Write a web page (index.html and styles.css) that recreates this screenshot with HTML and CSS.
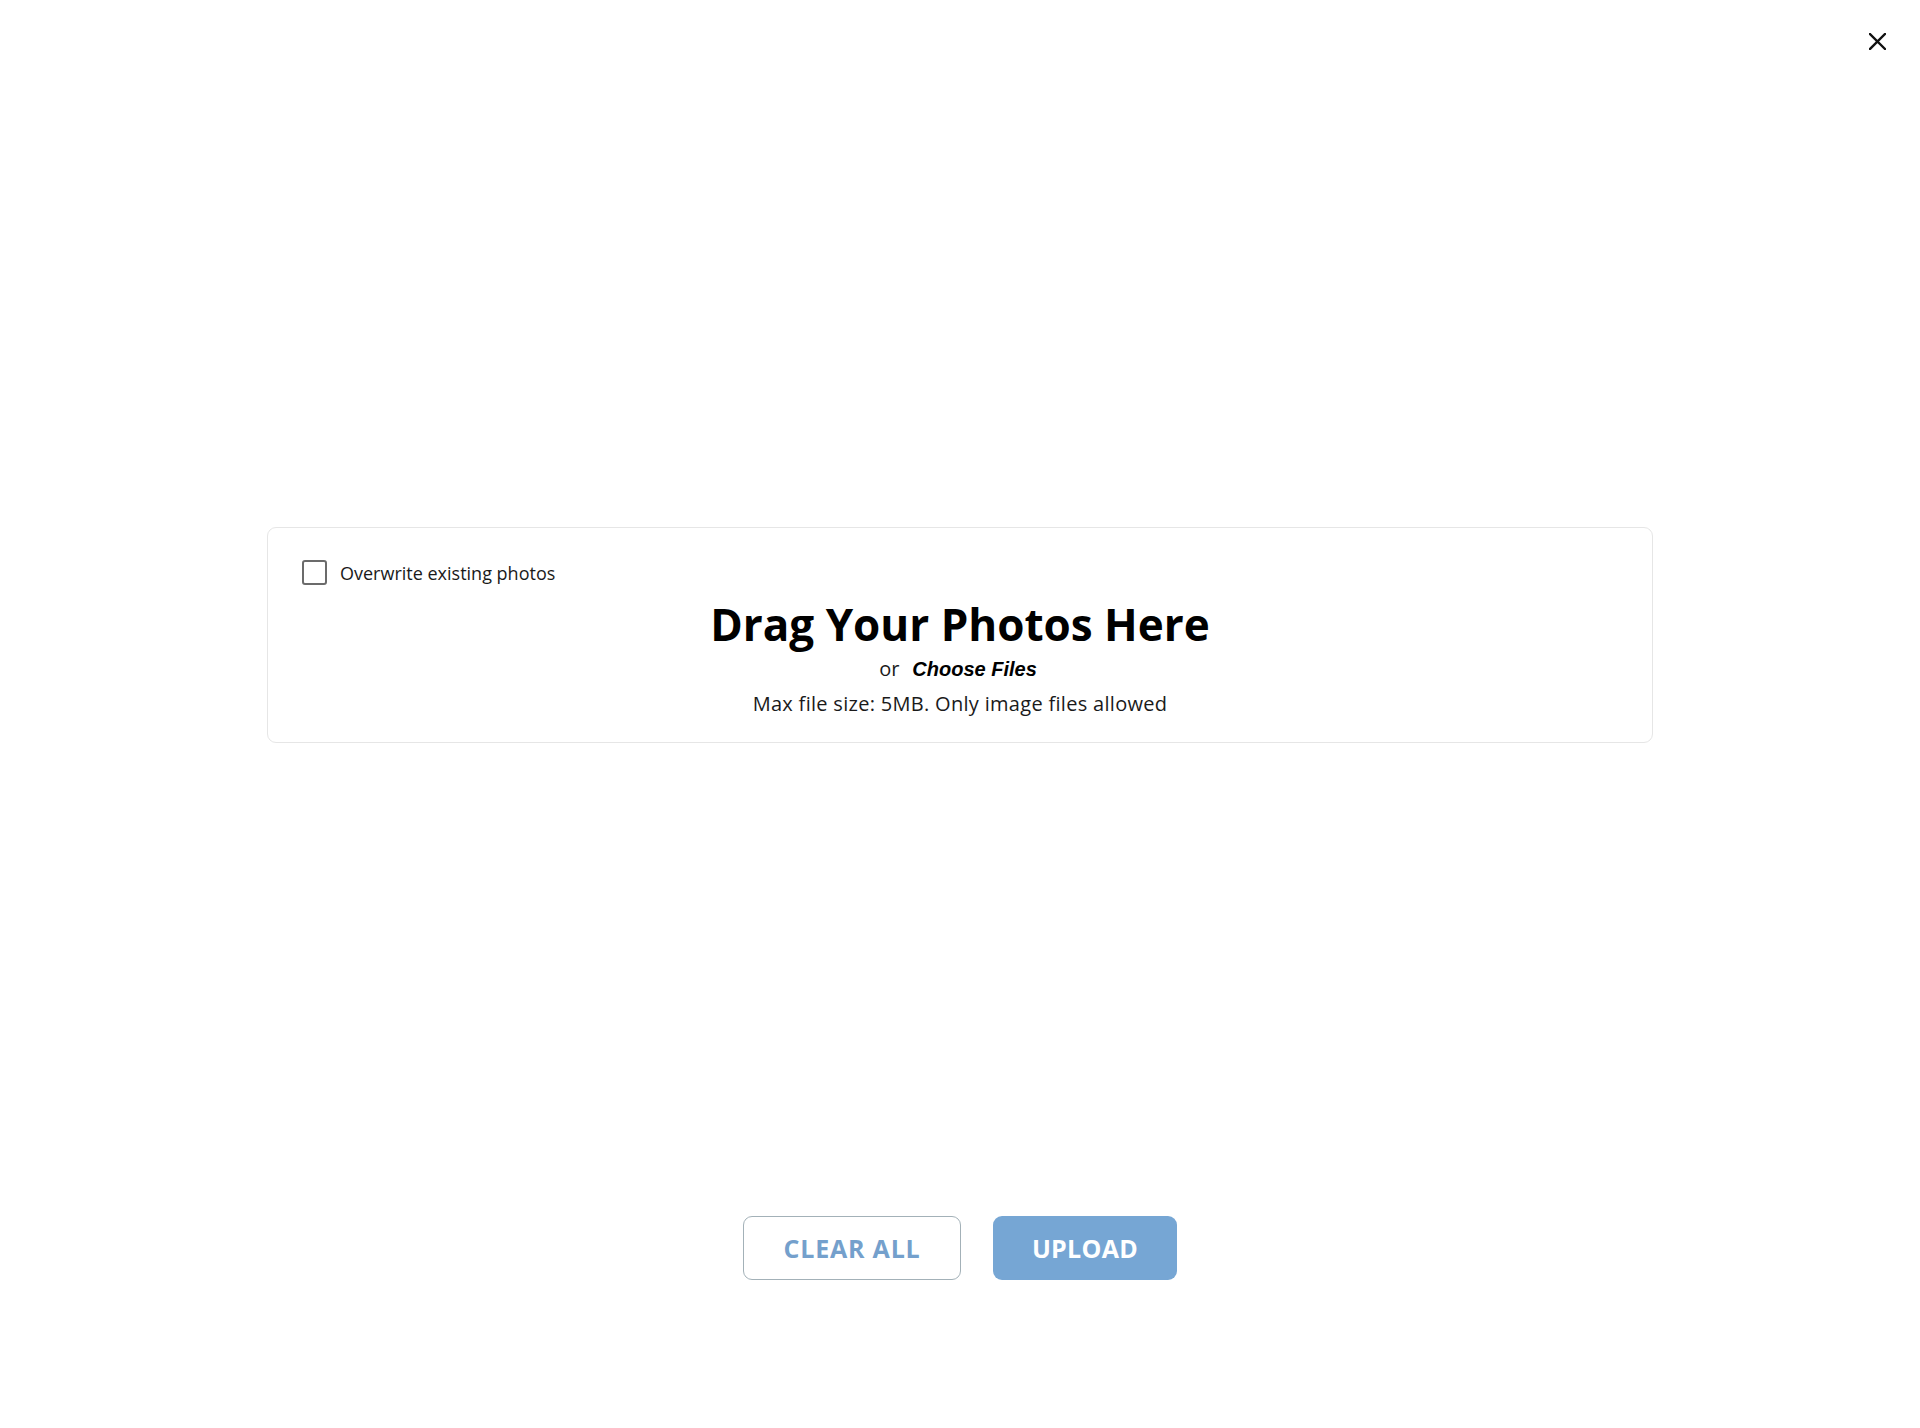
FILE: index.html
```html
<!DOCTYPE html>
<html lang="en">
<head>
<meta charset="utf-8">
<title>Upload Photos</title>
<link rel="stylesheet" href="styles.css">
</head>
<body>
<div class="page">
  <button class="close" aria-label="Close">
    <svg width="17" height="17" viewBox="0 0 17 17"><path d="M1 1L16 16M16 1L1 16" stroke="#111" stroke-width="2.4" stroke-linecap="square" fill="none"/></svg>
  </button>
  <main class="main">
    <section class="dropzone">
      <label class="check-row">
        <span class="checkbox"></span>
        <span class="check-label">Overwrite existing photos</span>
      </label>
      <h1 class="title">Drag Your Photos Here</h1>
      <p class="choose"><span class="or">or</span><span class="choose-link">Choose Files</span></p>
      <p class="hint">Max file size: 5MB. Only image files allowed</p>
    </section>
    <div class="actions">
      <button class="btn btn-outline">CLEAR ALL</button>
      <button class="btn btn-primary">UPLOAD</button>
    </div>
  </main>
</div>
</body>
</html>
```
FILE: styles.css
```css
html, body {
  margin: 0;
  padding: 0;
  background: #fff;
}
body {
  font-family: "Open Sans", "Liberation Sans", Arial, sans-serif;
  color: #111;
}
.page {
  position: relative;
  width: 1920px;
  height: 1428px;
  overflow: hidden;
}
.close {
  position: absolute;
  top: 33px;
  left: 1869px;
  width: 17px;
  height: 17px;
  padding: 0;
  border: 0;
  background: none;
  display: block;
}
.close svg { display: block; }
.main {
  padding-top: 527px;
  display: flex;
  flex-direction: column;
  align-items: center;
}
.dropzone {
  box-sizing: border-box;
  width: 1386px;
  height: 216px;
  border: 1px solid #e6e6e6;
  border-radius: 9px;
  padding: 32px 34px 0;
  display: flex;
  flex-direction: column;
  align-items: center;
}
.check-row {
  align-self: flex-start;
  display: flex;
  align-items: center;
  gap: 13px;
  height: 25px;
}
.checkbox {
  box-sizing: border-box;
  width: 25px;
  height: 25px;
  border: 2px solid #6b6b6b;
  border-radius: 3px;
}
.check-label {
  font-size: 18px;
  color: #1a1a1a;
}
.title {
  margin: 12px 0 0;
  font-size: 44px;
  line-height: 55px;
  font-weight: 700;
  color: #000;
}
.choose {
  margin: 3px 0 0;
  font-size: 20px;
  line-height: 28px;
  display: flex;
  gap: 13px;
  margin-left: -4px;
}
.or { color: #1a1a1a; }
.choose-link {
  font-family: "Liberation Sans", Arial, sans-serif;
  font-weight: 700;
  font-style: italic;
  color: #000;
}
.hint {
  margin: 7px 0 0;
  font-size: 20px;
  line-height: 28px;
  letter-spacing: 0.3px;
  color: #1a1a1a;
}
.actions {
  margin-top: 473px;
  display: flex;
  gap: 32px;
}
.btn {
  box-sizing: border-box;
  height: 64px;
  border-radius: 9px;
  font-family: "Open Sans", "Liberation Sans", Arial, sans-serif;
  font-size: 25px;
  font-weight: 700;
  padding: 0;
  cursor: pointer;
}
.btn-outline {
  width: 218px;
  background: #fff;
  border: 1px solid #a3b1b8;
  color: #74a0cc;
  letter-spacing: 0.8px;
}
.btn-primary {
  width: 184px;
  background: #76a6d4;
  border: 0;
  color: #fff;
  letter-spacing: 0.3px;
}
```
